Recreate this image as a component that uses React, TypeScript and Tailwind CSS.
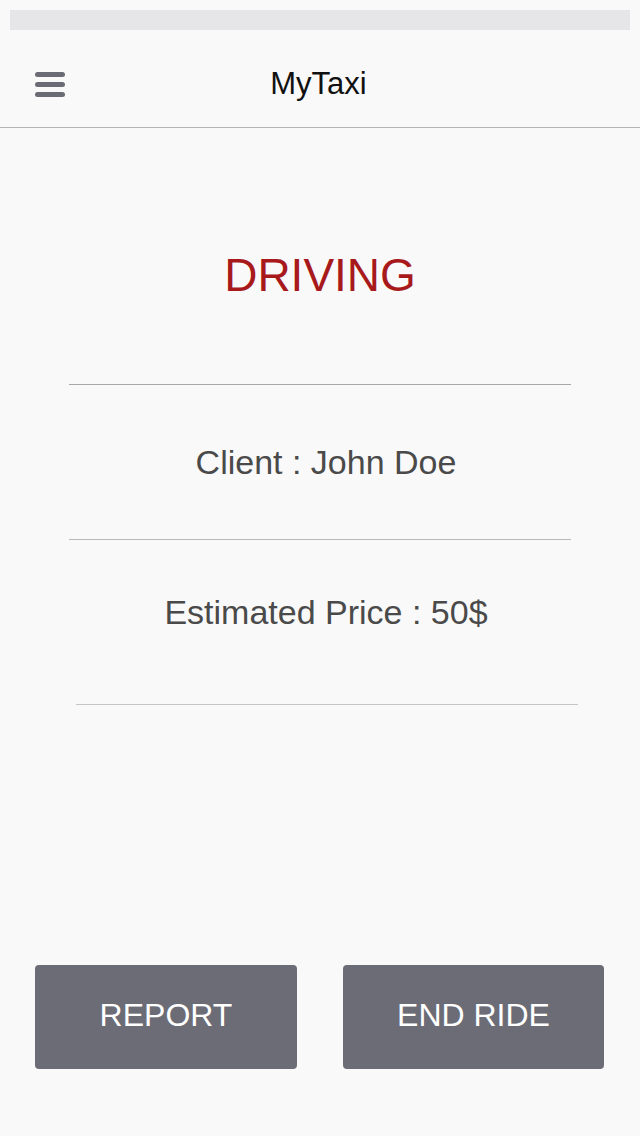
import React from "react";

export default function App() {
  return (
    <div className="w-[640px] h-[1136px] bg-[#f9f9f9] overflow-hidden" style={{ fontFamily: '"Liberation Sans", Arial, sans-serif' }}>
      <div className="pt-[10px] px-[10px]">
        <div className="h-[20px] bg-[#e6e6e8]" />
      </div>
      <div className="relative h-[98px] border-b border-[#b4b4b4] flex items-center justify-center">
        <div className="absolute left-[35px] top-[42px] flex flex-col gap-[5px]">
          <div className="w-[30px] h-[5px] rounded-full bg-[#6b6b75]" />
          <div className="w-[30px] h-[5px] rounded-full bg-[#6b6b75]" />
          <div className="w-[30px] h-[5px] rounded-full bg-[#6b6b75]" />
        </div>
        <div className="text-[31px] leading-[36px] text-[#111111] mt-[11px] pr-[3px]">MyTaxi</div>
      </div>
      <div className="flex flex-col">
        <div className="mt-[122px] h-[50px] leading-[50px] text-center text-[46px] text-[#a8191b]">DRIVING</div>
        <div className="mt-[84px] ml-[69px] w-[502px] h-px bg-[#a8a8a8]" />
        <div className="mt-[57px] h-[40px] leading-[40px] text-center text-[34px] text-[#4a4a4a] pl-[12px]">Client : John Doe</div>
        <div className="mt-[57px] ml-[69px] w-[502px] h-px bg-[#b8b8b8]" />
        <div className="mt-[52px] h-[40px] leading-[40px] text-center text-[34px] text-[#4a4a4a] pl-[12px]">Estimated Price : 50$</div>
        <div className="mt-[72px] ml-[76px] w-[502px] h-px bg-[#c4c4c4]" />
        <div className="mt-[260px] flex px-[35px] gap-[46px]">
          <button className="w-[262px] h-[104px] rounded-[4px] bg-[#6c6c76] text-white text-[32px] pb-[4px]">REPORT</button>
          <button className="w-[261px] h-[104px] rounded-[4px] bg-[#6c6c76] text-white text-[32px] pb-[4px]">END RIDE</button>
        </div>
      </div>
    </div>
  );
}
